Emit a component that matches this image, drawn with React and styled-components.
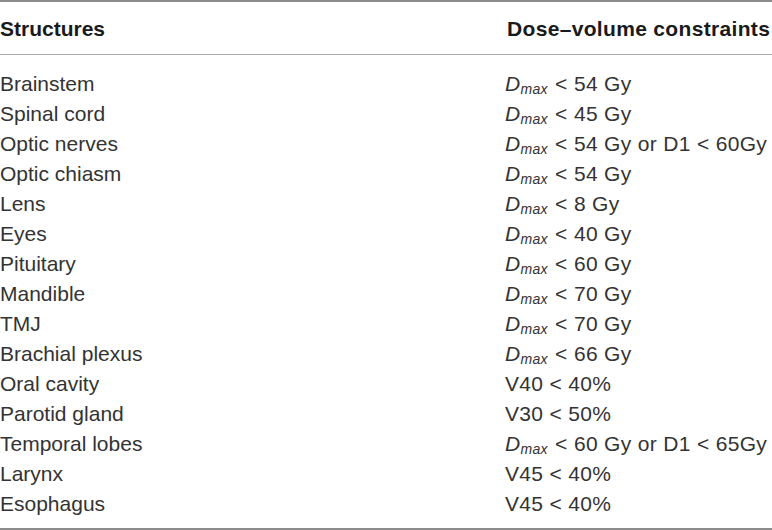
import React from "react";
import styled, { createGlobalStyle } from "styled-components";

const Global = createGlobalStyle`
  html, body { margin: 0; padding: 0; background: #fff; }
  body { font-family: "Liberation Sans", Arial, sans-serif; }
`;

const Table = styled.div`
  width: 772px;
  border-top: 2px solid #8c8c8c;
  border-bottom: 2px solid #8c8c8c;
  font-family: "Liberation Sans", Arial, sans-serif;
  font-size: 21px;
  line-height: 30px;
`;

const HeadRow = styled.div`
  display: grid;
  grid-template-columns: 507px 1fr;
  padding: 12px 0 10px;
  border-bottom: 1px solid #a8a8a8;
  font-weight: bold;
  color: #1a1a1a;
  white-space: nowrap;
`;

const Body = styled.div`
  padding: 14px 0 9px;
`;

const Row = styled.div`
  display: grid;
  grid-template-columns: 505px 1fr;
  color: #333;
  white-space: nowrap;
`;

const Cell = styled.div`
  letter-spacing: ${(p) => (p.$wide ? "0.33px" : "0")};
`;

const DVar = styled.span`
  font-style: italic;
`;

const Sub = styled.sub`
  font-size: 14px;
  line-height: 0;
  vertical-align: -3px;
  font-style: italic;
  margin-right: 1px;
`;

const Dmax = () => (
  <>
    <DVar>D</DVar>
    <Sub>max</Sub>
  </>
);

const rows = [
  ["Brainstem", true, " < 54 Gy"],
  ["Spinal cord", true, " < 45 Gy"],
  ["Optic nerves", true, " < 54 Gy or D1 < 60Gy"],
  ["Optic chiasm", true, " < 54 Gy"],
  ["Lens", true, " < 8 Gy"],
  ["Eyes", true, " < 40 Gy"],
  ["Pituitary", true, " < 60 Gy"],
  ["Mandible", true, " < 70 Gy"],
  ["TMJ", true, " < 70 Gy"],
  ["Brachial plexus", true, " < 66 Gy"],
  ["Oral cavity", false, "V40 < 40%"],
  ["Parotid gland", false, "V30 < 50%"],
  ["Temporal lobes", true, " < 60 Gy or D1 < 65Gy"],
  ["Larynx", false, "V45 < 40%"],
  ["Esophagus", false, "V45 < 40%"],
];

export default function App() {
  return (
    <>
      <Global />
      <Table>
        <HeadRow>
          <Cell>Structures</Cell>
          <Cell $wide>Dose–volume constraints</Cell>
        </HeadRow>
        <Body>
          {rows.map(([name, dm, txt]) => (
            <Row key={name}>
              <Cell>{name}</Cell>
              <Cell $wide>
                {dm && <Dmax />}
                {txt}
              </Cell>
            </Row>
          ))}
        </Body>
      </Table>
    </>
  );
}
